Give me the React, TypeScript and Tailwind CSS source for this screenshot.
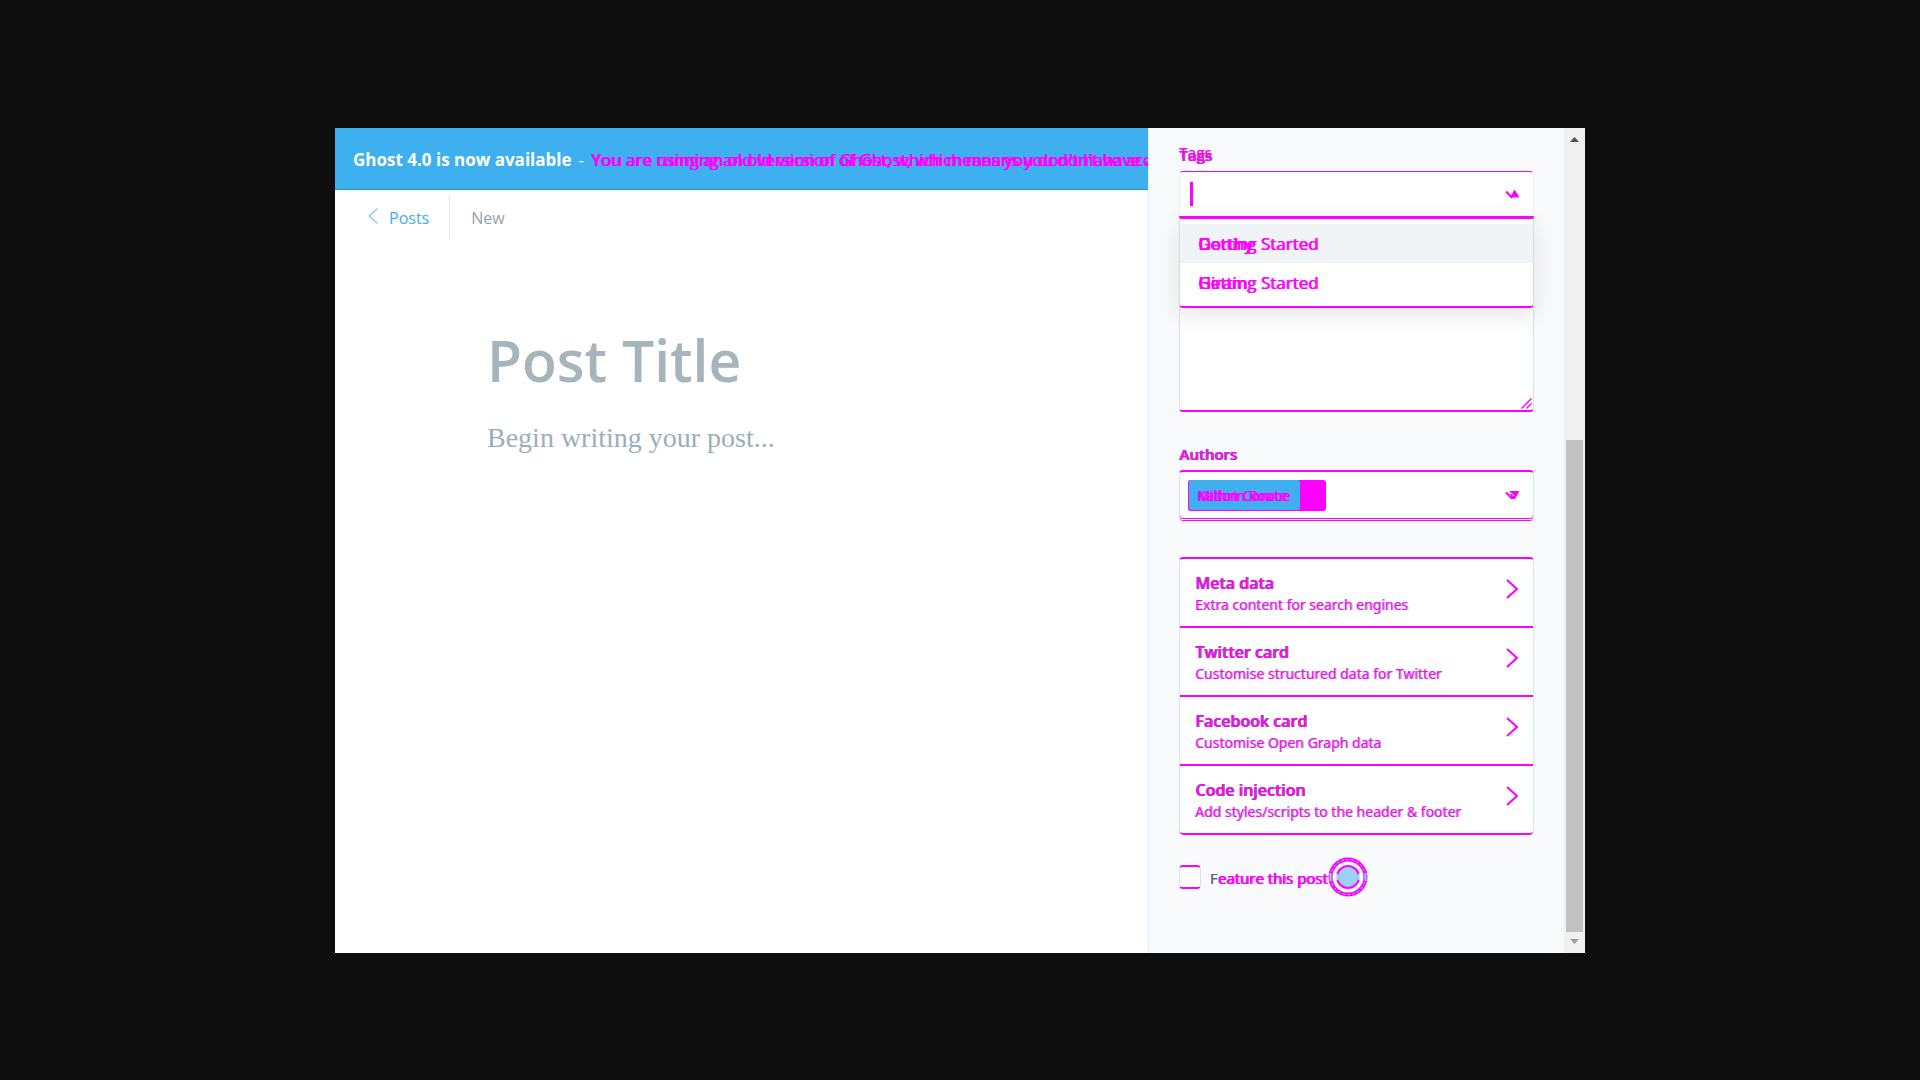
import React from "react";

const cards = [
  { title: "Meta data", note: "Extra content for search engines" },
  { title: "Twitter card", note: "Customise structured data for Twitter" },
  { title: "Facebook card", note: "Customise Open Graph data" },
  { title: "Code injection", note: "Add styles/scripts to the header & footer" },
];

const tags = ["Dorthy", "Hiram"];

function Layered({ lower, upper }: { lower: React.ReactNode; upper: React.ReactNode }) {
  return (
    <span className="grid">
      <span className="col-start-1 row-start-1">{lower}</span>
      <span className="col-start-1 row-start-1">{upper}</span>
    </span>
  );
}

function FieldArrow({ up = false }: { up?: boolean }) {
  return (
    <svg className="h-[10px] w-[15px] shrink-0" viewBox="0 0 15 10" fill="none" aria-hidden="true">
      <path d="M1 2.5 6.5 8 11 3.5" stroke="#f0f" strokeWidth="2" />
      <path d={up ? "M5 8.5 9.5.5 14.5 8.5Z" : "M4.500 1H14.500L10 9H7Z"} fill="#f0f" />
      {!up && <path d="M5 2 9 6" stroke="#fff" strokeWidth="1" />}
    </svg>
  );
}

function Banner() {
  return (
    <div className="flex h-[62px] items-center overflow-hidden border-b border-[#1f98e0] bg-[#3eb0ef] pt-[3px] pl-[18px] text-[17px] leading-6 whitespace-nowrap text-white">
      <b className="font-bold">Ghost 4.0 is now available</b>
      <span className="px-[7px]">-</span>
      <span className="text-[#f0f] [text-shadow:1px_0_#f0f]">
        <Layered
          lower="You are using an old version of Ghost, which means you don't have access"
          upper="You are running an old version of Ghost, which means you don't have access"
        />
      </span>
    </div>
  );
}

function Editor() {
  return (
    <main className="flex min-w-0 flex-1 flex-col bg-white">
      <Banner />
      <nav className="flex items-center pt-1 text-[16px] leading-6">
        <a href="#posts" className="flex h-[45px] items-center gap-[11px] border-r border-[#dfe9ef] pt-[3px] pr-[20px] pl-[33px] text-[#3eb0ef]">
          <svg className="mb-[3px] h-4 w-[10px]" viewBox="0 0 10 16" fill="none" aria-hidden="true">
            <path d="M9.500.5 1 8 9.500 15.500" stroke="#3eb0ef" />
          </svg>
          Posts
        </a>
        <span className="pt-[3px] pl-[21px] text-[#90a2aa]">New</span>
      </nav>
      <div className="flex flex-1 flex-col pt-[80px] pl-[152px]">
        <input
          aria-label="Post title"
          placeholder="Post Title"
          className="h-[84px] w-full bg-transparent text-[57px] font-semibold outline-none placeholder:text-[#a6b4bb] placeholder:opacity-100"
        />
        <textarea
          aria-label="Post body"
          placeholder="Begin writing your post..."
          className="mt-[17px] w-full flex-1 resize-none bg-transparent font-['Liberation_Serif',serif] text-[28px] leading-[36px] outline-none placeholder:text-[#9baeb8] placeholder:opacity-100"
        />
      </div>
    </main>
  );
}

function TagField() {
  return (
    <section className="relative z-10">
      <label htmlFor="tags" className="block pt-3 text-[15px] leading-6 font-semibold text-[#f0f]">
        <Layered
          lower={<span className="block pt-[3px] text-[#f0f] [text-shadow:1px_0_#54666d]">Tags</span>}
          upper="Tags"
        />
      </label>
      <div className="mt-[4px] flex h-[48px] items-center rounded-t-[4px] border-x border-t border-x-[#eef1f4] border-t-[#f0f] bg-white pr-[13px] pb-[3px] pl-[10px]">
        <span className="h-6 w-[3px] bg-[#f0f]" />
        <input id="tags" className="h-full min-w-0 flex-1 bg-transparent outline-none" />
        <FieldArrow up />
      </div>
      <ul className="absolute inset-x-0 top-full -mt-[3px] rounded-b-[4px] border-x border-t-[3px] border-b-2 border-x-[#d5dbe1] border-y-[#f0f] bg-white pt-[5px] pb-[4px] shadow-[0_8px_24px_rgba(0,0,0,0.1)]">
        {tags.map((tag, i) => (
          <li key={tag} className={i === 0 ? "bg-[#f0f4f7]" : "bg-white"}>
            <button type="button" className="block h-[39px] w-full pl-[18px] text-left text-[17px] leading-[40px] text-[#f0f] [text-shadow:1px_0_#f0f]">
              <Layered lower={tag} upper="Getting Started" />
            </button>
          </li>
        ))}
      </ul>
    </section>
  );
}

function Excerpt() {
  return (
    <div className="relative mt-[60px]">
      <textarea
        aria-label="Excerpt"
        className="block h-[133px] w-full resize-none rounded-b-[4px] border-x border-b-2 border-x-[#dae3ea] border-b-[#f0f] bg-white outline-none"
      />
      <svg className="absolute right-[2px] bottom-[3px] h-[11px] w-[11px]" viewBox="0 0 11 11" fill="none" stroke="#f0f" aria-hidden="true">
        <path d="M.5 10.500 10.500.5M5.500 10.500 10.500 5.500" strokeWidth="1.400" />
      </svg>
    </div>
  );
}

function AuthorField() {
  return (
    <section className="mt-[30px]">
      <h2 className="text-[15px] leading-6 font-semibold text-[#f0f] [text-shadow:1px_0_#54666d]">Authors</h2>
      <div className="mt-[4px] flex h-[51px] items-center justify-between rounded-[4px] border-x border-t-2 border-x-[#dae3ea] border-t-[#f0f] bg-white pr-[13px] pb-[2px] pl-[8px] shadow-[inset_0_-1px_#f0f,inset_0_-2px_#fff,inset_0_-3px_#f0f]">
        <button type="button" className="flex h-[31px] w-[138px] rounded-[3px] border-b border-l border-[#f0f] bg-[#f0f] text-left">
          <span className="h-[30px] w-[111px] rounded-[3px] bg-[#3eb0ef] pl-[8px] text-[14px] leading-[32px] whitespace-nowrap text-[#f0f] [text-shadow:1px_0_#f0f]">
            <Layered lower="Milton Conroe" upper="Kathrin Route" />
          </span>
        </button>
        <FieldArrow />
      </div>
    </section>
  );
}

function CardList() {
  return (
    <ul className="mt-[36px] rounded-[4px] border-x border-t-2 border-x-[#dae3ea] border-t-[#f0f] bg-white">
      {cards.map((card) => (
        <li key={card.title} className="border-b-2 border-[#f0f] last:rounded-b-[4px]">
          <button type="button" className="flex h-[67px] w-full items-center justify-between px-[15px] text-left text-[#f0f]">
            <span className="flex flex-col pt-[3px]">
              <span className="text-[16px] leading-[22px] font-semibold [text-shadow:1px_0_#54666d]">{card.title}</span>
              <span className="font-['Noto_Sans',sans-serif] text-[14px] leading-[22px] [text-shadow:1px_0_#9aabb5]">{card.note}</span>
            </span>
            <svg className="mb-[6px] h-5 w-3" viewBox="0 0 12 20" fill="none" stroke="#f0f" strokeWidth="2" aria-hidden="true">
              <path d="M1 1 11 10 1 19" />
            </svg>
          </button>
        </li>
      ))}
    </ul>
  );
}

function FeatureRow() {
  return (
    <div className="mt-[21px] flex items-center">
      <input
        id="feature"
        type="checkbox"
        className="h-6 w-[22px] appearance-none rounded-[4px] border-x border-t-2 border-b-2 border-x-[#dae3ea] border-y-[#f0f] bg-white"
      />
      <label htmlFor="feature" className="w-[118px] pt-[2px] pl-[9px] text-[15px] leading-6 whitespace-nowrap text-[#f0f]">
        <Layered
          lower={<span><span className="text-[#54666d]">F</span>eature this post</span>}
          upper={<span><span className="text-[#54666d]">F</span><span className="[text-shadow:1px_0_#f0f]">eature this post</span></span>}
        />
      </label>
      <svg className="ml-[8px] h-[42px] w-[42px]" viewBox="0 0 42 42" fill="none" aria-hidden="true">
        <circle cx="21" cy="21" r="17.500" stroke="#f0f" strokeWidth="4" />
        <circle cx="21" cy="21" r="17.500" stroke="#8ecdf5" strokeDasharray="3 2" />
        <path d="M3.500 17v8M38.500 17v8" stroke="#8ecdf5" strokeWidth="2" />
        <circle cx="21" cy="21" r="11" fill="#99d3f7" stroke="#f0f" strokeWidth="2" />
        <path d="M10 18v6M32 18v6" stroke="#b8e0f8" strokeWidth="2" />
      </svg>
    </div>
  );
}

function ScrollRail() {
  return (
    <div className="flex w-[21px] shrink-0 flex-col items-center bg-[#f0f0f0] py-[9px]">
      <svg className="h-[5px] w-[9px]" viewBox="0 0 9 5" aria-hidden="true"><path d="M0 5 4.500 0 9 5Z" fill="#505050" /></svg>
      <div className="mt-[298px] w-[17px] flex-1 bg-[#c1c1c1]" />
      <svg className="mt-[7px] h-[5px] w-[9px]" viewBox="0 0 9 5" aria-hidden="true"><path d="M0 0 4.500 5 9 0Z" fill="#a0a0a0" /></svg>
    </div>
  );
}

export default function App() {
  return (
    <div className="flex min-h-screen items-center justify-center bg-[#0e0e0e] font-['Open_Sans','Noto_Sans',sans-serif]">
      <div className="flex min-h-[825px] w-full max-w-[1250px] overflow-hidden bg-white">
        <Editor />
        <aside className="w-[416px] shrink-0 border-l border-[#e5eff5] bg-[#f9fafc] px-[30px]">
          <TagField />
          <Excerpt />
          <AuthorField />
          <CardList />
          <FeatureRow />
        </aside>
        <ScrollRail />
      </div>
    </div>
  );
}
